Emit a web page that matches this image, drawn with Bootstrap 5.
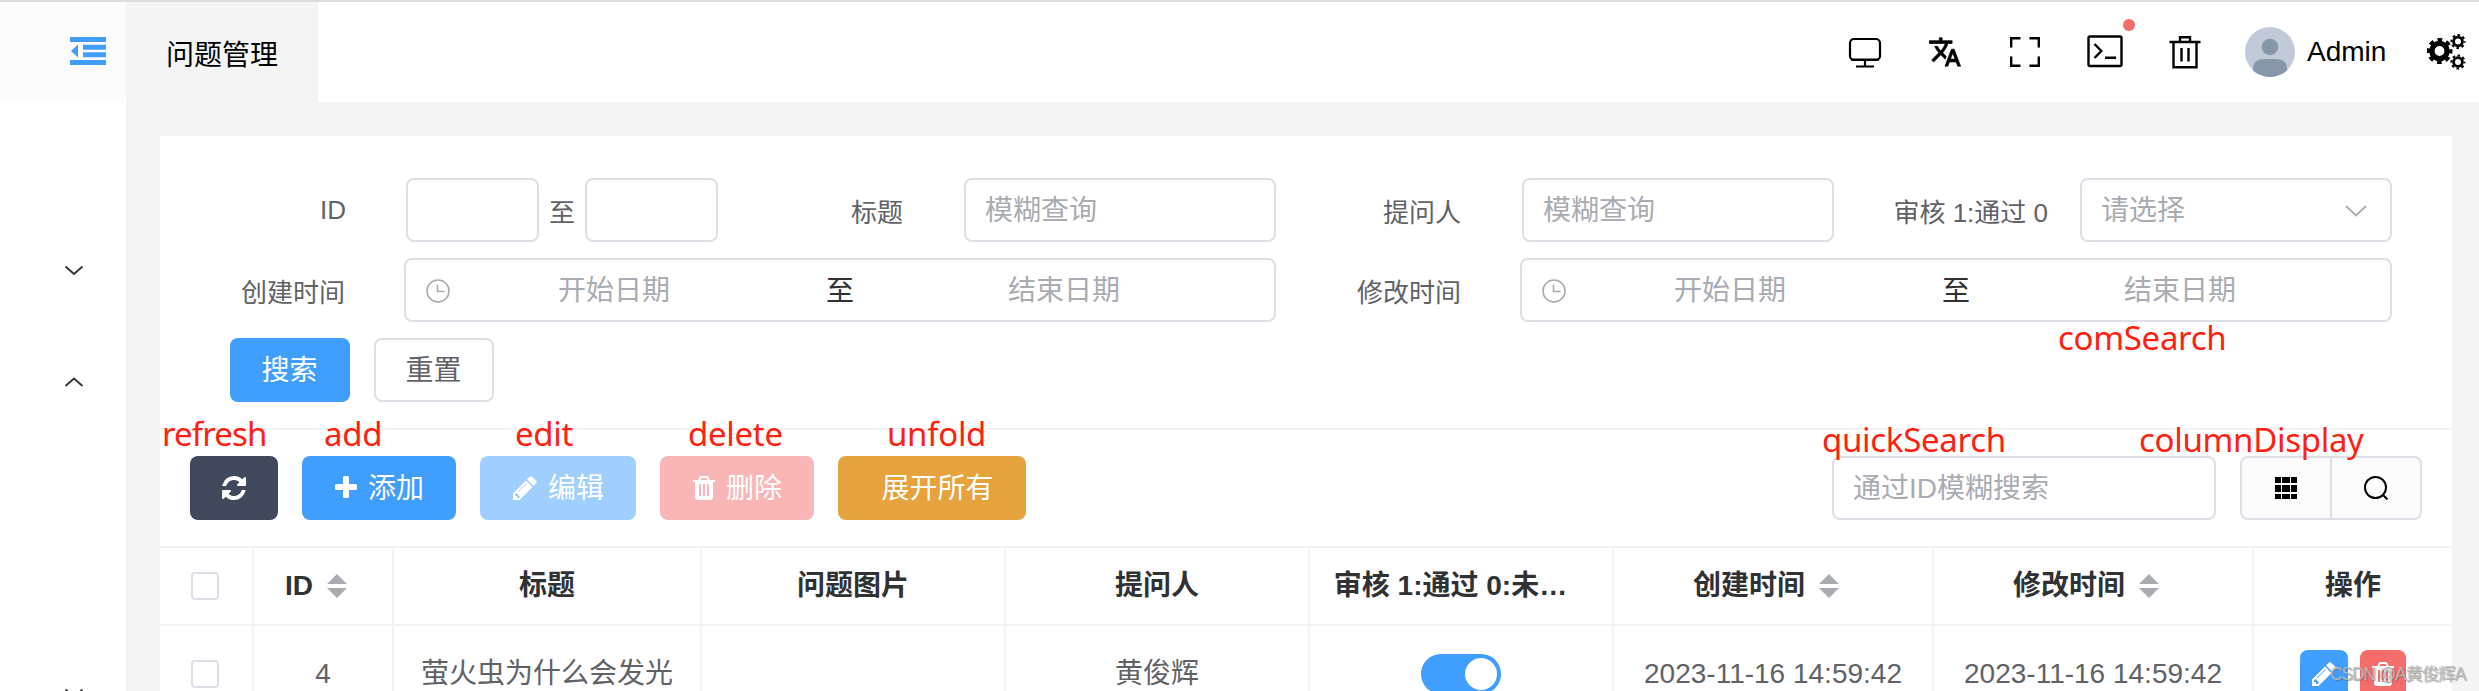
<!DOCTYPE html>
<html lang="zh-CN">
<head>
<meta charset="utf-8">
<title>问题管理</title>
<link href="https://cdn.jsdelivr.net/npm/bootstrap@5.3.0/dist/css/bootstrap.min.css" rel="stylesheet">
<style>
body{font-family:"Liberation Sans","Noto Sans CJK SC",sans-serif;font-size:28px;line-height:40px;color:#606266;background:#f4f4f4;width:2479px;height:691px;overflow:hidden;border-top:2px solid #dcdcdc}
svg{display:block;flex:none}
.app{height:689px;overflow:hidden}
.side{width:126px;flex:none;background:#fff}
.side-head{height:100px;background:#fcfcfc;padding:34px 20px 0 70px}
.side-arrow{padding-left:64px;color:#303133}
.topbar{height:100px;background:#fff;color:#000}
.tab-on{width:192px;background:#f4f4f4;padding-left:40px;padding-top:7px}
.tool{width:80px}
.dot{width:12px;height:12px;background:#f56c6c;top:17px;right:10px}
.user{padding-left:20px;gap:12px;width:202px}
.panel{margin:34px 27px 0 34px;background:#fff;height:555px;overflow:hidden}
.search{padding:42px 60px 26px 0;height:292px}
.frow{height:64px;margin-bottom:16px}
.field{width:558px;flex:none}
.field-wide{width:1116px;flex:none}
.flabel{flex:1;text-align:right;padding-right:61px;font-size:26px;white-space:nowrap;padding-top:5px}
.field-wide .flabel{padding-right:59px}
.box{height:64px;border:2px solid #dcdfe6;border-radius:8px;background:#fff;color:#a8abb2;display:flex;align-items:center;padding:1px 19px 0}
.w-full{width:312px}
.w-half{width:133px}
.range{width:872px;padding-left:20px}
.btn-el{height:64px;border-radius:8px;border:0;font-size:28px;line-height:40px;color:#fff;display:flex;align-items:center;justify-content:center;gap:9px;padding:2px 1px 0 0}
.btn-el svg{margin-top:-2px}
.blue{background:#409eff}.red{background:#f56c6c}.dark{background:#40485b}.orange{background:#e6a23c}
.blue-off{background:#a0cfff}.red-off{background:#fab6b6}
.toolbar{height:118px;padding:26px 30px 0;border-top:2px solid #f4f4f4;gap:24px}
.pair{height:64px;border:2px solid #dcdfe6;border-radius:8px;background:#fcfcfc;width:182px;color:#000}
.pair>div{flex:1;display:flex;align-items:center;justify-content:center}
.pair>div:first-child{border-right:2px solid #dcdfe6}
.grid-t{table-layout:fixed;width:2292px;border-collapse:separate;border-spacing:0;border-top:2px solid #f4f4f4}
.grid-t th,.grid-t td{border-right:2px solid #f4f4f4;border-bottom:2px solid #f4f4f4;text-align:center;vertical-align:middle;padding:0;white-space:nowrap}
.grid-t th{height:78px;color:#303133}
.grid-t td{height:98px}
.grid-t th:last-child,.grid-t td:last-child{border-right:0}
.sorter{display:flex;align-items:center;justify-content:center;gap:14px;padding-right:14px}
.chk{width:28px;height:28px;border:2px solid #dcdfe6;border-radius:4px;margin:-1px 0 0 31px}
.sw{width:80px;height:40px;border-radius:20px;background:#409eff;margin:0 auto;padding:4px}
.sw i{display:block;width:32px;height:32px;border-radius:50%;background:#fff;margin-left:auto}
.act{width:48px;height:48px;border-radius:8px;display:flex;align-items:center;justify-content:center}
.note{position:absolute;color:#ff2010;font-family:"Noto Sans","Open Sans",sans-serif;font-size:33px;letter-spacing:-.3px;line-height:40px;white-space:nowrap}
.wm{position:absolute;left:2330px;top:659px;font-size:17.5px;letter-spacing:-1.2px;line-height:30px;color:rgba(190,190,190,.9);text-shadow:1px 1px 1px rgba(90,90,90,.55);white-space:nowrap}
</style>
</head>
<body>
<svg width="0" height="0" class="position-absolute">
<symbol id="pencil" viewBox="0 0 1792 1792"><path fill="currentColor" d="M491 1536l91-91-235-235-91 91v107h128v128h107zm523-928q0-22-22-22-10 0-17 7l-542 542q-7 7-7 17 0 22 22 22 10 0 17-7l542-542q7-7 7-17zm-54-192l416 416-832 832h-416v-416zm683 96q0 53-37 90l-166 166-416-416 166-165q36-38 90-38 53 0 91 38l235 234q37 39 37 91z"/></symbol>
<symbol id="trash" viewBox="0 0 1792 1792"><path fill="currentColor" d="M704 1376v-704q0-14-9-23t-23-9h-64q-14 0-23 9t-9 23v704q0 14 9 23t23 9h64q14 0 23-9t9-23zm256 0v-704q0-14-9-23t-23-9h-64q-14 0-23 9t-9 23v704q0 14 9 23t23 9h64q14 0 23-9t9-23zm256 0v-704q0-14-9-23t-23-9h-64q-14 0-23 9t-9 23v704q0 14 9 23t23 9h64q14 0 23-9t9-23zm-544-992h448l-48-117q-7-9-17-11h-317q-10 2-17 11zm928 32v64q0 14-9 23t-23 9h-96v948q0 83-47 143.5t-113 60.5h-832q-66 0-113-58.5t-47-141.5v-952h-96q-14 0-23-9t-9-23v-64q0-14 9-23t23-9h309l70-167q15-37 54-63t79-26h320q40 0 79 26t54 63l70 167h309q14 0 23 9t9 23z"/></symbol>
<symbol id="clock" viewBox="0 0 24 24"><g fill="none" stroke="currentColor" stroke-width="1.6"><circle cx="12" cy="12" r="11"/><path d="M11.5 5.5v7h7"/></g></symbol>
<symbol id="sort" viewBox="0 0 20 24"><path fill="#a8abb2" d="M0 10L10 0l10 10zM0 14h20L10 24z"/></symbol>
</svg>
<div class="app d-flex">
  <aside class="side">
    <div class="side-head"><svg width="36" height="29" viewBox="0 0 36 29" fill="#409eff"><path d="M0 1h36v5H0zM13 8.700h23v5H13zM13 16.300h23v5H13zM0 24h36v5H0zM8 8.500v13L1 15z"/></svg></div>
    <div class="side-arrow" style="padding-top:162px"><svg width="20" height="12" fill="none" stroke="currentColor" stroke-width="1.800"><path d="M1.500 2.500L10 10l8.500-7.500"/></svg></div>
    <div class="side-arrow" style="padding-top:100px"><svg width="20" height="12" fill="none" stroke="currentColor" stroke-width="1.800"><path d="M1.500 10L10 2.500l8.500 7.500"/></svg></div>
    <div class="side-arrow" style="padding-top:299px"><svg width="20" height="12" fill="none" stroke="currentColor" stroke-width="1.800"><path d="M1.500 2.500L10 10l8.500-7.500"/></svg></div>
  </aside>
  <div class="flex-grow-1">
    <header class="topbar d-flex">
      <div class="tab-on d-flex align-items-center">问题管理</div>
      <div class="d-flex ms-auto align-items-center">
        <div class="tool d-flex justify-content-center"><svg width="34" height="34" viewBox="0 0 34 34" fill="none" stroke="currentColor" stroke-width="2.200"><rect x="2" y="4" width="30" height="21" rx="4"/><path d="M17 25v6M8 31.500h18M3 24.600h28"/></svg></div>
        <div class="tool d-flex justify-content-center"><svg width="34" height="34" viewBox="0 0 24 24"><path fill="currentColor" stroke="currentColor" stroke-width=".5" d="M12.870 15.070l-2.540-2.510.03-.03c1.740-1.940 2.980-4.170 3.710-6.530H17V4h-7V2H8v2H1v1.990h11.170C11.500 7.920 10.440 9.750 9 11.350 8.070 10.320 7.300 9.190 6.690 8h-2c.73 1.630 1.730 3.170 2.980 4.560l-5.090 5.020L4 19l5-5 3.110 3.110.76-2.040zM18.500 10h-2L12 22h2l1.120-3h4.750L21 22h2l-4.500-12zm-2.620 7l1.620-4.330L19.120 17h-3.240z"/></svg></div>
        <div class="tool d-flex justify-content-center"><svg width="30" height="30" fill="none" stroke="currentColor" stroke-width="2.400"><path d="M1.200 10.500V1.200H10.500M19.500 1.200h9.300v9.300M28.800 19.500v9.300h-9.300M10.500 28.800H1.200v-9.300"/></svg></div>
        <div class="tool d-flex justify-content-center align-items-center position-relative h-100 align-self-stretch"><span class="dot rounded-circle position-absolute"></span><svg width="36" height="34" fill="none" stroke="currentColor" stroke-width="2.400"><rect x="1.500" y="1.500" width="33" height="29.500" rx="1.500"/><path d="M7.500 9l6.800 7-6.800 7M18 22.800h11"/></svg></div>
        <div class="tool d-flex justify-content-center"><svg width="32" height="34" fill="none" stroke="currentColor" stroke-width="2.400"><path d="M.5 7h31M4.500 7v25.300h23V7M11 7V2.200h10V7M12.500 13v13.500M19.500 13v13.500"/></svg></div>
        <div class="user d-flex align-items-center">
          <svg width="50" height="50" viewBox="0 0 50 50"><defs><clipPath id="av"><circle cx="25" cy="25" r="25"/></clipPath></defs><g clip-path="url(#av)"><path fill="#c0cad8" d="M0 0h50v50H0z"/><circle cx="25" cy="20" r="8.300" fill="#8796a8"/><path fill="#8796a8" d="M8 50V42q0-10 11-10h12q11 0 11 10v8z"/></g></svg>
          <span>Admin</span>
        </div>
        <svg width="52" height="36" viewBox="0 0 52 36" fill="none" stroke="#000">
          <circle cx="12.500" cy="17" r="7.600" stroke-width="5.400"/><circle cx="12.500" cy="17" r="11.300" stroke-width="3.400" stroke-dasharray="4.700 4.180" stroke-dashoffset="2.350"/>
          <g id="g2"><circle cx="31" cy="7.500" r="4.400" stroke-width="2.800"/><circle cx="31" cy="7.500" r="6.500" stroke-width="2.200" stroke-dasharray="2.600 2.505" stroke-dashoffset="1.300"/></g>
          <use href="#g2" y="20.500"/>
        </svg>
      </div>
    </header>
    <main class="panel">
      <section class="search">
        <div class="frow d-flex">
          <div class="field d-flex align-items-center"><label class="flabel pt-0" style="padding-right:60px">ID</label><div class="box w-half"></div><span style="font-size:26px;padding:5px 10px 0">至</span><div class="box w-half"></div></div>
          <div class="field d-flex align-items-center"><label class="flabel">标题</label><div class="box w-full">模糊查询</div></div>
          <div class="field d-flex align-items-center"><label class="flabel">提问人</label><div class="box w-full">模糊查询</div></div>
          <div class="field d-flex align-items-center"><label class="flabel" style="padding-right:32px">审核 1:通过 0</label><div class="box w-full">请选择<svg class="ms-auto me-1" width="22" height="14" fill="none" stroke="currentColor" stroke-width="1.800"><path d="M1 2l10 9.500L21 2"/></svg></div></div>
        </div>
        <div class="frow d-flex">
          <div class="field-wide d-flex align-items-center"><label class="flabel">创建时间</label><div class="box range"><svg width="24" height="24"><use href="#clock"/></svg><span class="text-center" style="width:328px">开始日期</span><span class="text-center" style="width:124px;color:#303133;padding-top:3px">至</span><span class="text-center" style="width:324px">结束日期</span></div></div>
          <div class="field-wide d-flex align-items-center"><label class="flabel">修改时间</label><div class="box range"><svg width="24" height="24"><use href="#clock"/></svg><span class="text-center" style="width:328px">开始日期</span><span class="text-center" style="width:124px;color:#303133;padding-top:3px">至</span><span class="text-center" style="width:324px">结束日期</span></div></div>
        </div>
        <div class="d-flex gap-4" style="padding-left:70px"><button class="btn btn-el blue" style="width:120px">搜索</button><button class="btn btn-el" style="width:120px;color:#606266;border:2px solid #dcdfe6">重置</button></div>
      </section>
      <section class="toolbar d-flex">
        <button class="btn btn-el dark" style="width:88px"><svg width="28" height="28" viewBox="0 0 1792 1792"><path fill="currentColor" d="M1639 1056q0 5-1 7-64 268-268 434.500t-478 166.500q-146 0-282.500-55t-243.500-157l-129 129q-19 19-45 19t-45-19-19-45v-448q0-26 19-45t45-19h448q26 0 45 19t19 45-19 45l-137 137q71 66 161 102t187 36q134 0 250-65t186-179q11-17 53-117 8-23 30-23h192q13 0 22.500 9.500t9.500 22.500zm25-800v448q0 26-19 45t-45 19h-448q-26 0-45-19t-19-45 19-45l138-138q-148-137-349-137-134 0-250 65t-186 179q-11 17-53 117-8 23-30 23h-199q-13 0-22.500-9.500t-9.500-22.500v-7q65-268 270-434.500t480-166.500q146 0 284 55.500t245 156.500l130-129q19-19 45-19t45 19 19 45z"/></svg></button>
        <button class="btn btn-el blue" style="width:154px"><svg width="26" height="28" viewBox="64 0 1664 1792"><path fill="currentColor" d="M1600 736v192q0 40-28 68t-68 28h-416v416q0 40-28 68t-68 28h-192q-40 0-68-28t-28-68v-416h-416q-40 0-68-28t-28-68v-192q0-40 28-68t68-28h416v-416q0-40 28-68t68-28h192q40 0 68 28t28 68v416h416q40 0 68 28t28 68z"/></svg>添加</button>
        <button class="btn btn-el blue-off" style="width:156px"><svg width="28" height="28"><use href="#pencil"/></svg>编辑</button>
        <button class="btn btn-el red-off" style="width:154px"><svg width="26" height="28"><use href="#trash" x="-1" width="28" height="28"/></svg>删除</button>
        <button class="btn btn-el orange" style="width:188px;padding-left:12px">展开所有</button>
        <div class="box ms-auto" style="width:384px;padding-top:2px">通过ID模糊搜索</div>
        <div class="pair d-flex">
          <div><svg width="22" height="22" fill="#000"><path d="M0 0h6v6H0zM7 0h8v6H7zM16 0h6v6h-6zM0 8h6v7H0zM7 8h8v7H7zM16 8h6v7h-6zM0 17h6v5H0zM7 17h8v5H7zM16 17h6v5h-6z"/></svg></div>
          <div><svg width="24" height="24" fill="none" stroke="#000" stroke-width="2"><circle cx="11.500" cy="11.500" r="10.500"/><path d="M18.500 18.500l5 5"/></svg></div>
        </div>
      </section>
      <table class="grid-t">
        <colgroup><col style="width:94px"><col style="width:140px"><col style="width:308px"><col style="width:304px"><col style="width:304px"><col style="width:304px"><col style="width:320px"><col style="width:320px"><col style="width:198px"></colgroup>
        <thead><tr>
          <th><div class="chk"></div></th>
          <th><div class="sorter">ID<svg width="20" height="24"><use href="#sort"/></svg></div></th>
          <th>标题</th><th>问题图片</th><th>提问人</th><th style="padding-right:21px">审核 1:通过 0:未…</th>
          <th><div class="sorter">创建时间<svg width="20" height="24"><use href="#sort"/></svg></div></th>
          <th><div class="sorter">修改时间<svg width="20" height="24"><use href="#sort"/></svg></div></th>
          <th>操作</th>
        </tr></thead>
        <tbody><tr>
          <td><div class="chk"></div></td><td>4</td><td>萤火虫为什么会发光</td><td></td><td>黄俊辉</td>
          <td><div class="sw"><i></i></div></td>
          <td>2023-11-16 14:59:42</td><td>2023-11-16 14:59:42</td>
          <td><div class="d-flex justify-content-center text-white" style="gap:12px"><span class="act blue"><svg width="28" height="28"><use href="#pencil"/></svg></span><span class="act red" style="width:46px"><svg width="28" height="28"><use href="#trash"/></svg></span></div></td>
        </tr></tbody>
      </table>
    </main>
  </div>
</div>
<span class="note" style="left:2058px;top:318px">comSearch</span>
<span class="note" style="left:162px;top:414px;letter-spacing:-.9px">refresh</span>
<span class="note" style="left:324px;top:414px">add</span>
<span class="note" style="left:515px;top:414px">edit</span>
<span class="note" style="left:688px;top:414px">delete</span>
<span class="note" style="left:887px;top:414px">unfold</span>
<span class="note" style="left:1822px;top:420px">quickSearch</span>
<span class="note" style="left:2139px;top:420px">columnDisplay</span>
<span class="wm">CSDN @A黄俊辉A</span>
<script src="https://cdn.jsdelivr.net/npm/bootstrap@5.3.0/dist/js/bootstrap.bundle.min.js"></script>
</body>
</html>
